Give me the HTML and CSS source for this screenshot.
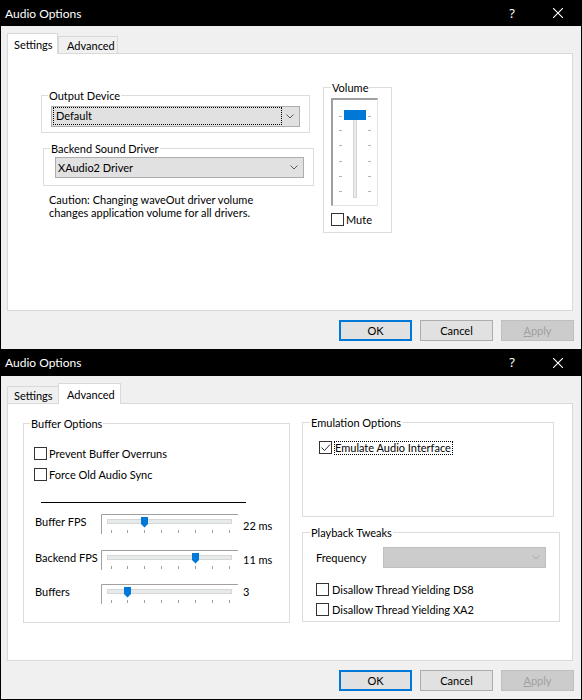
FILE: index.html
```html
<!DOCTYPE html>
<html>
<head>
<meta charset="utf-8">
<title>Audio Options</title>
<link rel="stylesheet" href="styles.css">
</head>
<body>
<div class="window w1">
  <div class="titlebar">
    <span class="title">Audio Options</span>
    <span class="capbtn help">?</span>
    <span class="capbtn close"><svg width="10" height="10" viewBox="0 0 10 10"><path d="M0 0L10 10M10 0L0 10" stroke="#fff" stroke-width="1.1" fill="none"/></svg></span>
  </div>
  <div class="body">
    <div class="tabs">
      <div class="tab active t-settings1">Settings</div>
      <div class="tab t-advanced1">Advanced</div>
    </div>
    <div class="panel p1">
      <div class="col1">
        <div class="group g-output">
          <div class="legend">Output Device</div>
          <div class="combo c-output">
            <span class="focus-rect">Default</span>
            <svg class="chev" width="8" height="5" viewBox="0 0 8 5"><path d="M0.5 0.5L4 4L7.5 0.5" stroke="#5a5a5a" fill="none"/></svg>
          </div>
        </div>
        <div class="group g-backend">
          <div class="legend">Backend Sound Driver</div>
          <div class="combo c-backend">
            <span class="combo-text">XAudio2 Driver</span>
            <svg class="chev" width="8" height="5" viewBox="0 0 8 5"><path d="M0.5 0.5L4 4L7.5 0.5" stroke="#5a5a5a" fill="none"/></svg>
          </div>
        </div>
        <p class="caution">Caution: Changing waveOut driver volume<br>changes application volume for all drivers.</p>
      </div>
      <div class="group g-volume">
        <div class="legend lg7">Volume</div>
        <div class="vslider">
          <svg width="44" height="105" viewBox="0 0 44 105">
            <rect x="20.5" y="15.5" width="3" height="82" fill="#e7eaea" stroke="#d6d6d6"/>
            <path d="M6 16.5h3M6 30.5h3M6 45.5h3M6 61.5h3M6 76.5h3M6 91.5h3M35 16.5h3M35 30.5h3M35 45.5h3M35 61.5h3M35 76.5h3M35 91.5h3" stroke="#b4b4b4"/>
            <rect x="11" y="10" width="22" height="10" fill="#0078d7"/>
          </svg>
        </div>
        <div class="check-row mute-row"><span class="cb"></span><span>Mute</span></div>
      </div>
    </div>
    <div class="buttons">
      <div class="btn default">OK</div>
      <div class="btn">Cancel</div>
      <div class="btn disabled"><u>A</u>pply</div>
    </div>
  </div>
</div>

<div class="window w2">
  <div class="titlebar">
    <span class="title">Audio Options</span>
    <span class="capbtn help">?</span>
    <span class="capbtn close"><svg width="10" height="10" viewBox="0 0 10 10"><path d="M0 0L10 10M10 0L0 10" stroke="#fff" stroke-width="1.1" fill="none"/></svg></span>
  </div>
  <div class="body">
    <div class="tabs">
      <div class="tab t-settings2">Settings</div>
      <div class="tab active t-advanced2">Advanced</div>
    </div>
    <div class="panel p2">
      <div class="group g-buffer">
        <div class="legend">Buffer Options</div>
        <div class="check-row cr-prevent"><span class="cb"></span><span>Prevent Buffer Overruns</span></div>
        <div class="check-row cr-force"><span class="cb"></span><span>Force Old Audio Sync</span></div>
        <div class="sep"></div>
        <div class="slider-row sr1">
          <span class="sl-label">Buffer FPS</span>
          <svg class="hslider" width="137" height="20" viewBox="0 0 137 20">
            <path d="M0.5 20V0.5H137" stroke="#a0a0a0" fill="none"/>
            <rect x="6.5" y="5.5" width="124" height="4" fill="#e7eaea" stroke="#d6d6d6"/>
            <path d="M10.5 16v3M26.5 16v3M43.5 16v3M60.5 16v3M77.5 16v3M94.5 16v3M111.5 16v3M128.5 16v3" stroke="#a0a0a0"/>
            <path d="M40 3h7v7l-3.5 3.5L40 10z" fill="#0078d7"/>
          </svg>
          <span class="sl-value">22 ms</span>
        </div>
        <div class="slider-row sr2">
          <span class="sl-label">Backend FPS</span>
          <svg class="hslider" width="137" height="20" viewBox="0 0 137 20">
            <path d="M0.5 20V0.5H137" stroke="#a0a0a0" fill="none"/>
            <rect x="6.5" y="5.5" width="124" height="4" fill="#e7eaea" stroke="#d6d6d6"/>
            <path d="M10.5 16v3M26.5 16v3M43.5 16v3M60.5 16v3M77.5 16v3M94.5 16v3M111.5 16v3M128.5 16v3" stroke="#a0a0a0"/>
            <path d="M91 3h7v7l-3.5 3.5L91 10z" fill="#0078d7"/>
          </svg>
          <span class="sl-value">11 ms</span>
        </div>
        <div class="slider-row sr3">
          <span class="sl-label">Buffers</span>
          <svg class="hslider" width="137" height="20" viewBox="0 0 137 20">
            <path d="M0.5 20V0.5H137" stroke="#a0a0a0" fill="none"/>
            <rect x="6.5" y="5.5" width="124" height="4" fill="#e7eaea" stroke="#d6d6d6"/>
            <path d="M10.5 16v3M26.5 16v3M43.5 16v3M60.5 16v3M77.5 16v3M94.5 16v3M111.5 16v3M128.5 16v3" stroke="#a0a0a0"/>
            <path d="M23 3h7v7l-3.5 3.5L23 10z" fill="#0078d7"/>
          </svg>
          <span class="sl-value">3</span>
        </div>
      </div>
      <div class="col2">
        <div class="group g-emu">
          <div class="legend lg7">Emulation Options</div>
          <div class="check-row cr-emu">
            <span class="cb checked"><svg width="11" height="11" viewBox="0 0 11 11"><path d="M1.5 5.5L4.5 8.5L10 2.5" stroke="#333" fill="none"/></svg></span>
            <span class="focus-label">Emulate Audio Interface</span>
          </div>
        </div>
        <div class="group g-play">
          <div class="legend lg7">Playback Tweaks</div>
          <div class="freq-row">
            <span class="freq-label">Frequency</span>
            <div class="combo disabled c-freq">
              <svg class="chev" width="8" height="5" viewBox="0 0 8 5"><path d="M0.5 0.5L4 4L7.5 0.5" stroke="#a6a6a6" fill="none"/></svg>
            </div>
          </div>
          <div class="check-row cr-ds8"><span class="cb"></span><span>Disallow Thread Yielding DS8</span></div>
          <div class="check-row cr-xa2"><span class="cb"></span><span>Disallow Thread Yielding XA2</span></div>
        </div>
      </div>
    </div>
    <div class="buttons">
      <div class="btn default">OK</div>
      <div class="btn">Cancel</div>
      <div class="btn disabled"><u>A</u>pply</div>
    </div>
  </div>
</div>
</body>
</html>
```

FILE: styles.css
```css
* { box-sizing: border-box; }

html, body {
  margin: 0;
  padding: 0;
}

body {
  width: 582px;
  height: 700px;
  overflow: hidden;
  font-family: Lato, "Noto Sans", sans-serif;
  font-size: 11px;
  line-height: 15px;
  color: #000;
  background: #f0f0f0;
}

.window {
  width: 582px;
  border-left: 1px solid #000;
  border-right: 1px solid #000;
  background: #f0f0f0;
}

.w2 {
  border-bottom: 1px solid #000;
}

.titlebar {
  display: flex;
  align-items: center;
  height: 26px;
  background: #000;
  color: #fff;
}

.w2 .titlebar {
  height: 27px;
}

.title {
  padding-left: 4px;
  font-size: 12px;
  flex: 1;
}

.capbtn {
  width: 46px;
  height: 100%;
  display: flex;
  align-items: center;
  justify-content: center;
}

.help {
  font-family: "Noto Sans", sans-serif;
  font-size: 13px;
}

.body {
  padding: 7px 7px 8px 6px;
}

.tabs {
  display: flex;
  align-items: flex-end;
  height: 20px;
}

.tab {
  height: 17px;
  border: 1px solid #d9d9d9;
  border-bottom: none;
  background: #f0f0f0;
  padding: 1px 0 0 7px;
}

.tab.active {
  height: 21px;
  margin-bottom: -1px;
  background: #fff;
  padding-top: 3px;
  position: relative;
  z-index: 1;
}

.t-settings1 { width: 51px; padding-left: 6px; }
.t-advanced1 { width: 60px; padding-left: 8px; }
.t-settings2 { width: 52px; padding-left: 6px; }
.t-advanced2 { width: 63px; padding-left: 8px; margin-left: -1px; }

.panel {
  width: 566px;
  height: 258px;
  border: 1px solid #d9d9d9;
  background: #fff;
  display: flex;
  align-items: flex-start;
}

/* group boxes */
.group {
  border: 1px solid #dcdcdc;
  background: #fff;
}

.legend {
  width: fit-content;
  background: #fff;
  margin: -8px 0 0 6px;
  padding: 0 1px;
  line-height: 15px;
}

.lg7 { margin-left: 7px; }

/* combo boxes */
.combo {
  height: 21px;
  border: 1px solid #adadad;
  background: #e1e1e1;
  display: flex;
  align-items: center;
}

.combo .chev {
  margin-left: auto;
  margin-right: 5px;
}

.combo.disabled {
  background: #cccccc;
  border-color: #bfbfbf;
}

.focus-rect {
  align-self: flex-start;
  width: 229px;
  height: 18px;
  margin-left: 1px;
  padding-left: 2px;
  border: 1px dotted #000;
  line-height: 16px;
}

.combo-text {
  padding-left: 2px;
}

/* settings page */
.col1 {
  width: 273px;
  margin: 41px 0 0 33px;
}

.g-output {
  width: 269px;
  padding-bottom: 5px;
}

.c-output {
  width: 249px;
  margin: 3px 0 0 9px;
}

.g-backend {
  width: 271px;
  margin: 15px 0 0 2px;
  padding-bottom: 7px;
}

.c-backend {
  width: 249px;
  margin: 1px 0 0 11px;
}

.caution {
  margin: 7px 0 0 8px;
  line-height: 13px;
}

.g-volume {
  width: 69px;
  height: 146px;
  margin: 33px 0 0 9px;
}

.vslider {
  width: 47px;
  height: 108px;
  margin: 3px 0 0 7px;
  border-left: 2px solid #a0a0a0;
  border-top: 2px solid #a0a0a0;
  border-right: 1px solid #e3e3e3;
  border-bottom: 1px solid #e3e3e3;
  background: #fff;
}

.vslider svg { display: block; }

/* checkboxes */
.check-row {
  display: flex;
  align-items: center;
  height: 15px;
  gap: 2px;
}

.cb {
  width: 13px;
  height: 13px;
  border: 1px solid #333;
  background: #fff;
  flex: none;
  display: flex;
  align-items: center;
  justify-content: center;
}

.cb svg { display: block; }

.mute-row { margin: 6px 0 0 7px; }

/* advanced page */
.g-buffer {
  width: 267px;
  height: 200px;
  margin: 19px 0 0 15px;
}

.cr-prevent { margin: 15px 0 0 10px; }
.cr-force { margin: 6px 0 0 10px; }

.sep {
  width: 205px;
  height: 1px;
  background: #000;
  margin: 20px 0 0 17px;
}

.slider-row {
  display: flex;
  align-items: flex-start;
  height: 20px;
}

.sl-label {
  width: 66px;
  margin-left: 11px;
}

.hslider { display: block; flex: none; }

.sl-value { margin-left: 5px; }

.sr1 { margin-top: 11px; }
.sr1 .sl-value { margin-top: 4px; }
.sr2 { margin-top: 16px; }
.sr2 .sl-value { margin-top: 2px; }
.sr3 { margin-top: 14px; }

.col2 {
  margin: 18px 0 0 12px;
}

.g-emu {
  width: 252px;
  height: 95px;
}

.cr-emu { margin: 10px 0 0 16px; }

.focus-label {
  height: 14px;
  border: 1px dotted #000;
  line-height: 12px;
  padding: 0 1px 0 0;
}

.g-play {
  width: 258px;
  height: 90px;
  margin-top: 15px;
}

.freq-row {
  display: flex;
  align-items: center;
  margin: 7px 0 0 13px;
}

.freq-label { width: 67px; }

.c-freq { width: 163px; }

.cr-ds8 { margin: 14px 0 0 13px; gap: 3px; }
.cr-xa2 { margin: 5px 0 0 13px; gap: 3px; }

/* buttons */
.buttons {
  display: flex;
  justify-content: flex-end;
  gap: 8px;
  margin-top: 9px;
}

.btn {
  width: 73px;
  height: 21px;
  border: 1px solid #adadad;
  background: #e1e1e1;
  text-align: center;
  line-height: 19px;
}

.btn.default {
  border: 2px solid #0078d7;
  line-height: 17px;
}

.btn.disabled {
  background: #cccccc;
  border-color: #bfbfbf;
  color: #a0a0a0;
}

.btn u { text-decoration-thickness: 1px; }
```
